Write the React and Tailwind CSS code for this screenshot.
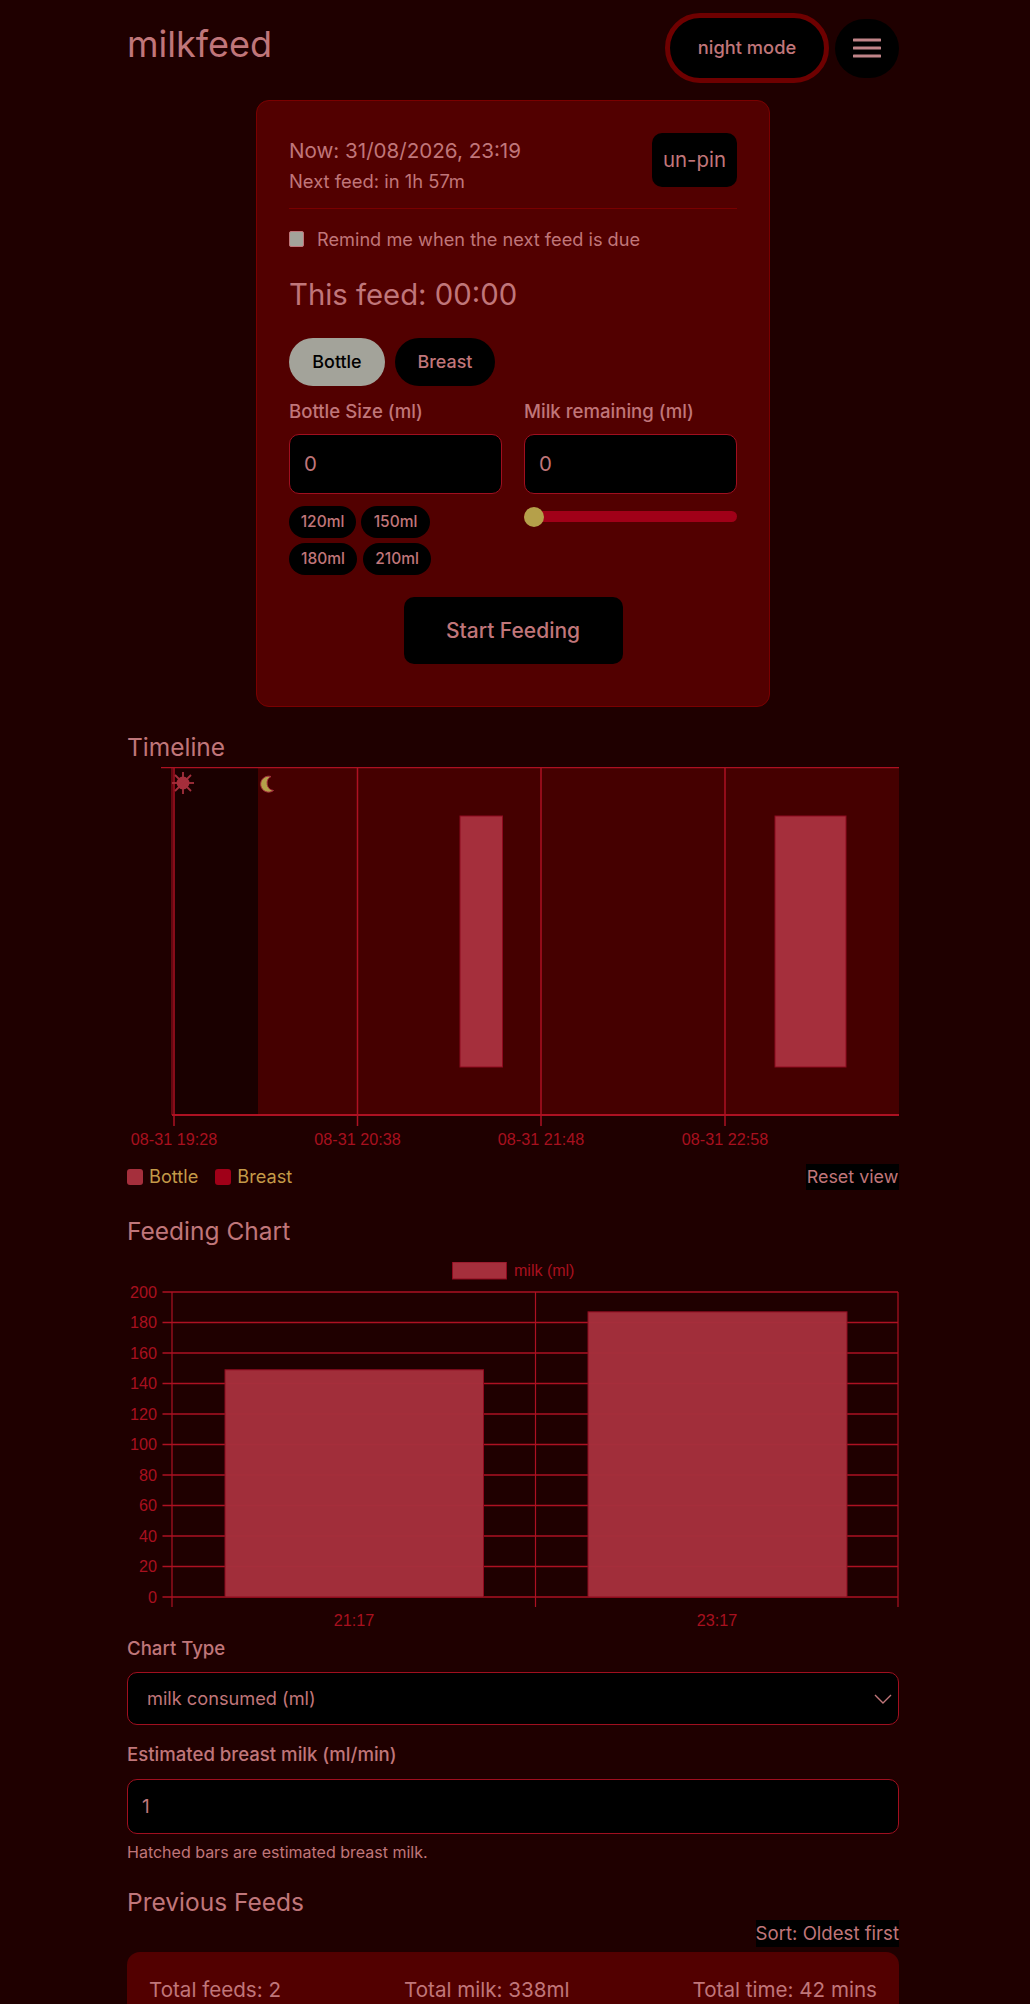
const LINE = '#ad1122';
const BAR = '#a52f3c';
const TICK = '#a8101f';

// x offsets are relative to the 772px content column
const timelineTicks = [
  { x: 47, label: '08-31 19:28' },
  { x: 230.5, label: '08-31 20:38' },
  { x: 414, label: '08-31 21:48' },
  { x: 598, label: '08-31 22:58' },
];

function TimelineChart() {
  return (
    <svg width="772" height="384" viewBox="0 0 772 384" className="block">
      <rect x="47" y="0" width="84" height="348" fill="#1a0000" />
      <rect x="131" y="0" width="641" height="348" fill="#450000" />
      <rect x="333" y="49" width="42.5" height="251" fill={BAR} stroke="#8e0a1e" />
      <rect x="648" y="49" width="71" height="251" fill={BAR} stroke="#8e0a1e" />
      <line x1="34" y1="0.5" x2="772" y2="0.5" stroke={LINE} strokeWidth="1.5" />
      <line x1="45" y1="0" x2="45" y2="348" stroke={LINE} strokeWidth="1" />
      {timelineTicks.map(t => (
        <g key={t.x}>
          <line x1={t.x} y1="0" x2={t.x} y2="359" stroke={LINE} strokeWidth="1.5" />
          <text x={t.x} y="378" textAnchor="middle" fontSize="16.2" fontFamily="Liberation Sans, sans-serif" fill={TICK}>{t.label}</text>
        </g>
      ))}
      <line x1="45" y1="348" x2="772" y2="348" stroke={LINE} strokeWidth="2" />
      {/* sun */}
      <g transform="translate(56 16)" stroke="#a52f3c" strokeWidth="1.8">
        <circle r="5.5" fill="#a52f3c" />
        <line x1="0" y1="-11" x2="0" y2="11" />
        <line x1="-11" y1="0" x2="11" y2="0" />
        <line x1="-8" y1="-8" x2="8" y2="8" />
        <line x1="-8" y1="8" x2="8" y2="-8" />
      </g>
      {/* moon */}
      <path d="M144 9.5 A8 8 0 1 0 146.5 23.5 A7.5 7.5 0 0 1 144 9.5 Z" fill="#b5a04a" stroke="#a52f3c" strokeWidth="1" />
    </svg>
  );
}

const yTicks = [200, 180, 160, 140, 120, 100, 80, 60, 40, 20, 0];

function FeedChart() {
  const top = 30;
  const bottom = 335;
  const yFor = v => bottom - (v / 200) * (bottom - top);
  return (
    <svg width="772" height="374" viewBox="0 0 772 374" className="block">
      <rect x="325.5" y="0" width="54" height="17" fill={BAR} stroke="#8e0a1e" />
      <text x="387" y="14" fontSize="16" fontFamily="Liberation Sans, sans-serif" fill={TICK}>milk (ml)</text>
      {yTicks.map(v => (
        <g key={v}>
          <line x1="35.5" y1={yFor(v)} x2="771" y2={yFor(v)} stroke={LINE} strokeWidth="1.5" />
          <text x="30" y={yFor(v) + 5.5} textAnchor="end" fontSize="16.2" fontFamily="Liberation Sans, sans-serif" fill={TICK}>{v}</text>
        </g>
      ))}
      {[45, 408.5, 771].map(x => (
        <line key={x} x1={x} y1={top} x2={x} y2="345" stroke={LINE} strokeWidth="1.2" />
      ))}
      <rect x="98" y={yFor(149)} width="258.5" height={bottom - yFor(149)} fill={BAR} fillOpacity="0.97" stroke="#8e0a1e" />
      <rect x="461" y={yFor(187)} width="259" height={bottom - yFor(187)} fill={BAR} fillOpacity="0.97" stroke="#8e0a1e" />
      <text x="227" y="364" textAnchor="middle" fontSize="16.2" fontFamily="Liberation Sans, sans-serif" fill={TICK}>21:17</text>
      <text x="590" y="364" textAnchor="middle" fontSize="16.2" fontFamily="Liberation Sans, sans-serif" fill={TICK}>23:17</text>
    </svg>
  );
}

function Chip({ label, className }) {
  return (
    <button className={`h-8 rounded-full bg-black text-[15.5px] font-medium text-[#c0767a] ${className}`}>{label}</button>
  );
}

export default function App() {
  return (
    <div className="h-[2004px] overflow-hidden bg-[#1f0000] font-['Inter',sans-serif] text-[#c0767a]">
      <div className="mx-auto w-[772px] -translate-x-[2px]">
        <header className="flex h-[100px] items-start justify-between">
          <h1 className="mt-[22px] text-[36px] leading-[44px]">milkfeed</h1>
          <div className="mt-[13px] flex items-center gap-[6px]">
            <button className="h-[70px] w-[164px] rounded-full border-[5.5px] border-[#6e0000] bg-black text-[18.3px] font-medium">night mode</button>
            <button className="flex h-[59px] w-[64px] items-center justify-center rounded-full bg-black">
              <svg width="28" height="20" viewBox="0 0 28 20">
                <path d="M1 2h26M1 10h26M1 18h26" stroke="#c08488" strokeWidth="3" strokeLinecap="round" />
              </svg>
            </button>
          </div>
        </header>

        <section className="mx-auto h-[607px] w-[514px] rounded-[13px] border border-[#7a0000] bg-[#520000] px-[32px]">
          <div className="flex h-[108px] items-start justify-between border-b border-[#7a0000] pt-[32px]">
            <div>
              <p className="text-[20.6px] leading-[36px]">Now: 31/08/2026, 23:19</p>
              <p className="text-[18.4px] leading-[24px]">Next feed: in 1h 57m</p>
            </div>
            <button className="h-[54px] w-[85px] rounded-[10px] bg-black text-[20.4px]">un-pin</button>
          </div>
          <label className="mt-[21px] flex items-center gap-[13px]">
            <span className="h-4 w-[15px] rounded-[2px] border border-[#c0767a] bg-[#a3a39a]" />
            <span className="text-[18.2px] leading-[18px]">Remind me when the next feed is due</span>
          </label>
          <h2 className="mt-[27px] text-[29.3px] leading-[40px]">This feed: 00:00</h2>
          <div className="mt-[23px] flex gap-[10px]">
            <button className="h-[48px] w-[96px] rounded-full bg-[#a3a39a] text-[17.9px] font-medium text-black">Bottle</button>
            <button className="h-[48px] w-[100px] rounded-full bg-black text-[17.9px] font-medium">Breast</button>
          </div>
          <div className="mt-[13px] grid grid-cols-2 gap-x-[22px]">
            <div>
              <p className="text-[18.6px] font-medium leading-[24px]">Bottle Size (ml)</p>
              <div className="mt-[11px] flex h-[60px] items-center rounded-[10px] border border-[#a00f1f] bg-black px-[14px] text-[20.4px]">0</div>
              <div className="mt-[12px] flex gap-[5px]">
                <Chip label="120ml" className="w-[67px]" />
                <Chip label="150ml" className="w-[69px]" />
              </div>
              <div className="mt-[5px] flex gap-[6px]">
                <Chip label="180ml" className="w-[68px]" />
                <Chip label="210ml" className="w-[68px]" />
              </div>
            </div>
            <div>
              <p className="text-[18.6px] font-medium leading-[24px]">Milk remaining (ml)</p>
              <div className="mt-[11px] flex h-[60px] items-center rounded-[10px] border border-[#a00f1f] bg-black px-[14px] text-[20.4px]">0</div>
              <div className="relative mt-[17px] h-[11px] rounded-full bg-[#a00018]">
                <span className="absolute -top-1 left-0 h-[20px] w-[20px] rounded-full bg-[#b5a04a]" />
              </div>
            </div>
          </div>
          <div className="mt-[22px] flex justify-center">
            <button className="h-[67px] w-[219px] rounded-[10px] bg-black text-[21px] font-medium">Start Feeding</button>
          </div>
        </section>

        <h2 className="mt-[24px] text-[24.5px] leading-[32px]">Timeline</h2>
        <div className="mt-[4px]">
          <TimelineChart />
        </div>
        <div className="mt-[12px] flex items-center justify-between">
          <div className="flex items-center text-[18.2px] text-[#c49a48]">
            <span className="h-4 w-4 rounded-[3px] bg-[#a52f3c]" />
            <span className="ml-[6px]">Bottle</span>
            <span className="ml-[17px] h-4 w-4 rounded-[3px] bg-[#a00018]" />
            <span className="ml-[6px]">Breast</span>
          </div>
          <button className="h-[26px] w-[93px] bg-black text-[17.9px] leading-[26px]">Reset view</button>
        </div>

        <h2 className="mt-[25px] text-[24.5px] leading-[32px]">Feeding Chart</h2>
        <div className="mt-[15px]">
          <FeedChart />
        </div>
        <label className="block text-[18.6px] font-medium leading-[24px]">Chart Type</label>
        <div className="mt-[12px] flex h-[53px] items-center justify-between rounded-[10px] border border-[#a00f1f] bg-black pl-[19px] pr-[6px] text-[18.2px]">
          <span>milk consumed (ml)</span>
          <svg width="18" height="10" viewBox="0 0 18 10" fill="none">
            <path d="M1 1l8 8 8-8" stroke="#c0767a" strokeWidth="1.4" />
          </svg>
        </div>
        <label className="mt-[17px] block text-[18.6px] font-medium leading-[24px]">Estimated breast milk (ml/min)</label>
        <div className="mt-[13px] flex h-[55px] items-center rounded-[10px] border border-[#a00f1f] bg-black px-[14px] text-[18.9px]">1</div>
        <p className="mt-[8px] text-[16px] leading-[20px]">Hatched bars are estimated breast milk.</p>
        <h2 className="mt-[24px] text-[24.5px] leading-[32px]">Previous Feeds</h2>
        <div className="mt-[2px] flex justify-end">
          <button className="h-[27px] bg-black text-[18.6px] leading-[27px]">Sort: Oldest first</button>
        </div>
        <div className="mt-[5px] flex h-[120px] items-start justify-between rounded-[13px] bg-[#520000] px-[22px] pt-[26px] text-[20.6px] leading-[24px]">
          <span>Total feeds: 2</span>
          <span>Total milk: 338ml</span>
          <span>Total time: 42 mins</span>
        </div>
      </div>
    </div>
  );
}
